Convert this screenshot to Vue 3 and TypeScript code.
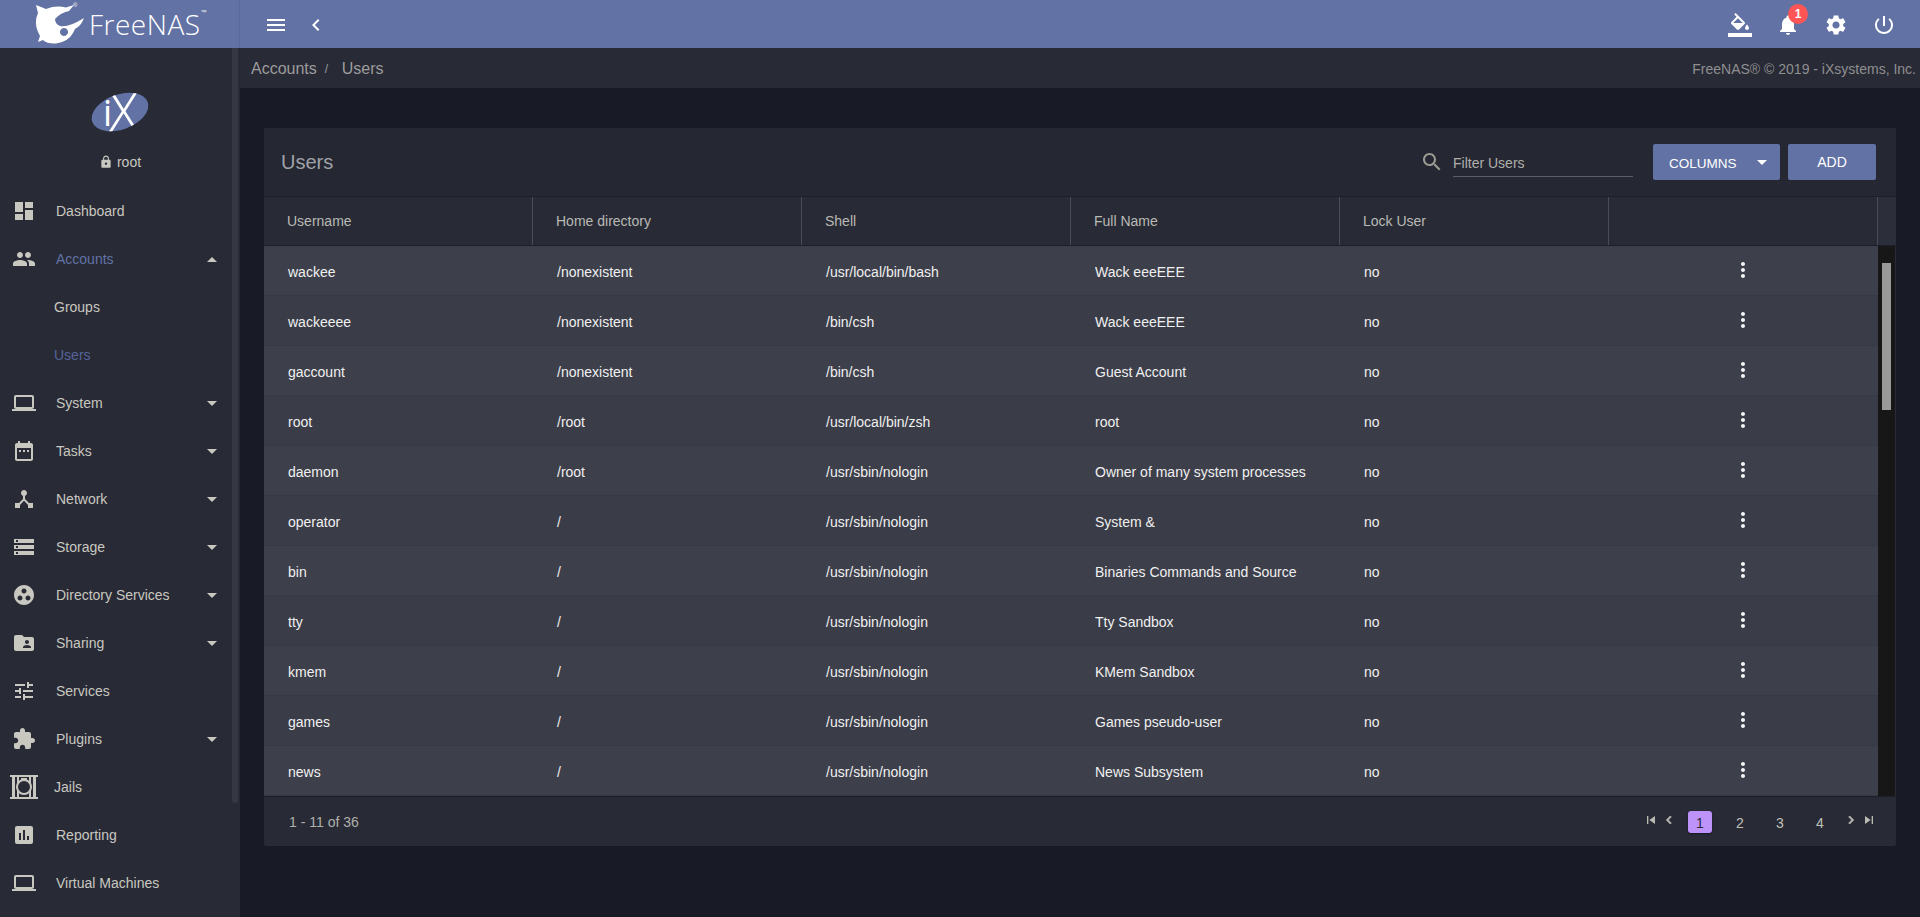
<script setup lang="ts">
const icons: Record<string, string> = {
  dashboard: 'M3 13h8V3H3v10zm0 8h8v-6H3v6zm10 0h8V11h-8v10zm0-18v6h8V3h-8z',
  group: 'M16 11c1.66 0 2.99-1.34 2.99-3S17.66 5 16 5c-1.66 0-3 1.34-3 3s1.34 3 3 3zm-8 0c1.66 0 2.99-1.34 2.99-3S9.66 5 8 5C6.34 5 5 6.34 5 8s1.34 3 3 3zm0 2c-2.33 0-7 1.17-7 3.5V19h14v-2.5c0-2.33-4.67-3.5-7-3.5zm8 0c-.29 0-.62.02-.97.05 1.16.84 1.97 1.97 1.97 3.45V19h6v-2.5c0-2.33-4.67-3.5-7-3.5z',
  laptop: 'M20 18c1.1 0 1.99-.9 1.99-2L22 6c0-1.1-.9-2-2-2H4c-1.1 0-2 .9-2 2v10c0 1.1.9 2 2 2H0v2h24v-2h-4zM4 6h16v10H4V6z',
  tasks: 'M9 11H7v2h2v-2zm4 0h-2v2h2v-2zm4 0h-2v2h2v-2zm2-7h-1V2h-2v2H8V2H6v2H5c-1.11 0-1.99.9-1.99 2L3 20c0 1.1.89 2 2 2h14c1.1 0 2-.9 2-2V6c0-1.1-.9-2-2-2zm0 16H5V9h14v11z',
  hub: 'M17 16l-4-4V8.82C14.16 8.4 15 7.3 15 6c0-1.66-1.34-3-3-3S9 4.34 9 6c0 1.3.84 2.4 2 2.82V12l-4 4H3v5h5v-3.05l4-4.2 4 4.2V21h5v-5h-4z',
  storage: 'M2 20h20v-4H2v4zm2-3h2v2H4v-2zM2 4v4h20V4H2zm4 3H4V5h2v2zm-4 7h20v-4H2v4zm2-3h2v2H4v-2z',
  work: 'M12 2C6.48 2 2 6.48 2 12s4.48 10 10 10 10-4.48 10-10S17.52 2 12 2zM8 17.5c-1.38 0-2.5-1.12-2.5-2.5s1.12-2.5 2.5-2.5 2.5 1.12 2.5 2.5-1.12 2.5-2.5 2.5zM9.5 8c0-1.38 1.12-2.5 2.5-2.5s2.5 1.12 2.5 2.5-1.12 2.5-2.5 2.5S9.5 9.38 9.5 8zm6.5 9.5c-1.38 0-2.5-1.12-2.5-2.5s1.12-2.5 2.5-2.5 2.5 1.12 2.5 2.5-1.12 2.5-2.5 2.5z',
  folder: 'M20 6h-8l-2-2H4c-1.1 0-1.99.9-1.99 2L2 18c0 1.1.9 2 2 2h16c1.1 0 2-.9 2-2V8c0-1.1-.9-2-2-2zm-5 3c1.1 0 2 .9 2 2s-.9 2-2 2-2-.9-2-2 .9-2 2-2zm4 8h-8v-1c0-1.33 2.67-2 4-2s4 .67 4 2v1z',
  tune: 'M3 17v2h6v-2H3zM3 5v2h10V5H3zm10 16v-2h8v-2h-8v-2h-2v6h2zM7 9v2H3v2h4v2h2V9H7zm14 4v-2H11v2h10zm-6-4h2V7h4V5h-4V3h-2v6z',
  extension: 'M20.5 11H19V7c0-1.1-.9-2-2-2h-4V3.5C13 2.12 11.88 1 10.5 1S8 2.12 8 3.5V5H4c-1.1 0-1.99.9-1.99 2v3.8H3.5c1.49 0 2.7 1.21 2.7 2.7s-1.21 2.7-2.7 2.7H2V20c0 1.1.9 2 2 2h3.8v-1.5c0-1.49 1.21-2.7 2.7-2.7 1.49 0 2.7 1.21 2.7 2.7V22H17c1.1 0 2-.9 2-2v-4h1.5c1.38 0 2.5-1.12 2.5-2.5S21.88 11 20.5 11z',
  assessment: 'M19 3H5c-1.1 0-2 .9-2 2v14c0 1.1.9 2 2 2h14c1.1 0 2-.9 2-2V5c0-1.1-.9-2-2-2zM9 17H7v-7h2v7zm4 0h-2V7h2v10zm4 0h-2v-4h2v4z',
  lock: 'M18 8h-1V6c0-2.76-2.24-5-5-5S7 3.24 7 6v2H6c-1.1 0-2 .9-2 2v10c0 1.1.9 2 2 2h12c1.1 0 2-.9 2-2V10c0-1.1-.9-2-2-2zm-6 9c-1.1 0-2-.9-2-2s.9-2 2-2 2 .9 2 2-.9 2-2 2zm3.1-9H8.9V6c0-1.71 1.39-3.1 3.1-3.1 1.71 0 3.1 1.39 3.1 3.1v2z',
  fill: 'M16.56 8.94L7.62 0 6.21 1.41l2.38 2.38-5.15 5.15c-.59.59-.59 1.54 0 2.12l5.5 5.5c.29.29.68.44 1.06.44s.77-.15 1.06-.44l5.5-5.5c.59-.58.59-1.53 0-2.12zM5.21 10L10 5.21 14.79 10H5.21zM19 11.5s-2 2.17-2 3.5c0 1.1.9 2 2 2s2-.9 2-2c0-1.33-2-3.5-2-3.5zM0 20h24v4H0z',
  bell: 'M12 22c1.1 0 2-.9 2-2h-4c0 1.1.89 2 2 2zm6-6v-5c0-3.07-1.64-5.64-4.5-6.32V4c0-.83-.67-1.5-1.5-1.5s-1.5.67-1.5 1.5v.68C7.63 5.36 6 7.92 6 11v5l-2 2v1h16v-1l-2-2z',
  settings: 'M19.14 12.94c.04-.3.06-.61.06-.94 0-.32-.02-.64-.07-.94l2.03-1.58c.18-.14.23-.41.12-.61l-1.92-3.32c-.12-.22-.37-.29-.59-.22l-2.39.96c-.5-.38-1.03-.7-1.62-.94l-.36-2.54c-.04-.24-.24-.41-.48-.41h-3.84c-.24 0-.43.17-.47.41l-.36 2.54c-.59.24-1.13.57-1.62.94l-2.39-.96c-.22-.08-.47 0-.59.22L2.74 8.87c-.12.21-.08.47.12.61l2.03 1.58c-.05.3-.09.63-.09.94s.02.64.07.94l-2.03 1.58c-.18.14-.23.41-.12.61l1.92 3.32c.12.22.37.29.59.22l2.39-.96c.5.38 1.03.7 1.62.94l.36 2.54c.05.24.24.41.48.41h3.84c.24 0 .44-.17.47-.41l.36-2.54c.59-.24 1.13-.56 1.62-.94l2.39.96c.22.08.47 0 .59-.22l1.92-3.32c.12-.22.07-.47-.12-.61l-2.01-1.58zM12 15.6c-1.98 0-3.6-1.62-3.6-3.6s1.62-3.6 3.6-3.6 3.6 1.62 3.6 3.6-1.62 3.6-3.6 3.6z',
  power: 'M13 3h-2v10h2V3zm4.83 2.17l-1.42 1.42C17.99 7.86 19 9.81 19 12c0 3.87-3.13 7-7 7s-7-3.13-7-7c0-2.19 1.01-4.14 2.58-5.42L6.17 5.17C4.23 6.82 3 9.26 3 12c0 4.97 4.03 9 9 9s9-4.03 9-9c0-2.74-1.23-5.18-3.17-6.83z',
  search: 'M15.5 14h-.79l-.28-.27C15.41 12.59 16 11.11 16 9.5 16 5.91 13.09 3 9.5 3S3 5.91 3 9.5 5.91 16 9.5 16c1.61 0 3.09-.59 4.23-1.57l.27.28v.79l5 4.99L20.49 19l-4.99-5zm-6 0C7.01 14 5 11.99 5 9.5S7.01 5 9.5 5 14 7.01 14 9.5 11.99 14 9.5 14z',
  more: 'M12 8c1.1 0 2-.9 2-2s-.9-2-2-2-2 .9-2 2 .9 2 2 2zm0 2c-1.1 0-2 .9-2 2s.9 2 2 2 2-.9 2-2-.9-2-2-2zm0 6c-1.1 0-2 .9-2 2s.9 2 2 2 2-.9 2-2-.9-2-2-2z',
  menu: 'M3 18h18v-2H3v2zm0-5h18v-2H3v2zm0-7v2h18V6H3z',
  left: 'M15.41 7.41L14 6l-6 6 6 6 1.41-1.41L10.83 12z',
  right: 'M10 6L8.59 7.41 13.17 12l-4.58 4.59L10 18l6-6z',
  first: 'M6 6h2v12H6zm3.5 6l8.5 6V6z',
  last: 'M6 18l8.5-6L6 6v12zM16 6v12h2V6h-2z',
}

type NavItem = { label: string; icon?: string; caret?: 'up' | 'down'; active?: boolean; sub?: boolean; jail?: boolean }

const nav: NavItem[] = [
  { label: 'Dashboard', icon: 'dashboard' },
  { label: 'Accounts', icon: 'group', caret: 'up', active: true },
  { label: 'Groups', sub: true },
  { label: 'Users', sub: true, active: true },
  { label: 'System', icon: 'laptop', caret: 'down' },
  { label: 'Tasks', icon: 'tasks', caret: 'down' },
  { label: 'Network', icon: 'hub', caret: 'down' },
  { label: 'Storage', icon: 'storage', caret: 'down' },
  { label: 'Directory Services', icon: 'work', caret: 'down' },
  { label: 'Sharing', icon: 'folder', caret: 'down' },
  { label: 'Services', icon: 'tune' },
  { label: 'Plugins', icon: 'extension', caret: 'down' },
  { label: 'Jails', jail: true },
  { label: 'Reporting', icon: 'assessment' },
  { label: 'Virtual Machines', icon: 'laptop' },
]

const columns = ['Username', 'Home directory', 'Shell', 'Full Name', 'Lock User', '']

const users = [
  ['wackee', '/nonexistent', '/usr/local/bin/bash', 'Wack eeeEEE', 'no'],
  ['wackeeee', '/nonexistent', '/bin/csh', 'Wack eeeEEE', 'no'],
  ['gaccount', '/nonexistent', '/bin/csh', 'Guest Account', 'no'],
  ['root', '/root', '/usr/local/bin/zsh', 'root', 'no'],
  ['daemon', '/root', '/usr/sbin/nologin', 'Owner of many system processes', 'no'],
  ['operator', '/', '/usr/sbin/nologin', 'System &', 'no'],
  ['bin', '/', '/usr/sbin/nologin', 'Binaries Commands and Source', 'no'],
  ['tty', '/', '/usr/sbin/nologin', 'Tty Sandbox', 'no'],
  ['kmem', '/', '/usr/sbin/nologin', 'KMem Sandbox', 'no'],
  ['games', '/', '/usr/sbin/nologin', 'Games pseudo-user', 'no'],
  ['news', '/', '/usr/sbin/nologin', 'News Subsystem', 'no'],
]

const pages = [1, 2, 3, 4]
</script>

<template>
  <div class="app">
    <header class="topbar">
      <div class="brand">
        <svg class="shark" viewBox="34 2 52 44" width="52" height="44">
          <path
            fill-rule="evenodd"
            d="M36 5L46 9Q56 5 66 7.5L74 5L69 11Q60 13 55 19Q55 24 60 26Q68 28 84 18Q81 26 75 29L73 33Q68 42 56 43.5Q47 44 43 40L38 42L40 36Q33 24 38 13ZM64 28a4 4 0 1 0 .01 0Z"
          />
        </svg>
        <span class="reg">®</span>
        <span class="wordmark">FreeNAS</span>
        <span class="tm">™</span>
      </div>
      <button class="top-btn menu-btn"><svg class="ic" viewBox="0 0 24 24"><path :d="icons.menu" /></svg></button>
      <button class="top-btn back-btn"><svg class="ic" viewBox="0 0 24 24"><path :d="icons.left" /></svg></button>
      <div class="top-actions">
        <button class="top-btn"><svg class="ic" viewBox="0 0 24 24"><path :d="icons.fill" /></svg></button>
        <button class="top-btn bell">
          <svg class="ic" viewBox="0 0 24 24"><path :d="icons.bell" /></svg>
          <span class="badge">1</span>
        </button>
        <button class="top-btn"><svg class="ic" viewBox="0 0 24 24"><path :d="icons.settings" /></svg></button>
        <button class="top-btn"><svg class="ic" viewBox="0 0 24 24"><path :d="icons.power" /></svg></button>
      </div>
    </header>

    <div class="main">
      <aside class="sidebar">
        <div class="thumb"></div>
        <div class="profile">
          <svg class="ix" viewBox="-20 -28 100 100" width="100" height="100">
            <defs>
              <clipPath id="ixclip"><ellipse cx="30" cy="22" rx="29.5" ry="17.5" transform="rotate(-20 30 22)" /></clipPath>
            </defs>
            <ellipse cx="30" cy="22" rx="29.5" ry="17.5" transform="rotate(-20 30 22)" fill="#6272a4" />
            <g clip-path="url(#ixclip)" fill="#fff">
              <text><tspan x="13" y="36" class="ix-i">i</tspan><tspan x="18" y="43" class="ix-x">X</tspan></text>
            </g>
          </svg>
          <div class="who"><svg class="ic lock" viewBox="0 0 24 24"><path :d="icons.lock" /></svg><span>root</span></div>
        </div>
        <nav>
          <a
            v-for="item in nav"
            :key="item.label"
            class="nav-item"
            :class="{ active: item.active, sub: item.sub, 'jail-item': item.jail }"
          >
            <svg v-if="item.icon" class="ic nav-ic" viewBox="0 0 24 24"><path :d="icons[item.icon]" /></svg>
            <svg v-if="item.jail" class="jail" viewBox="0 0 28 24" width="28" height="24">
              <rect x="0" y="0" width="28" height="2" />
              <rect x="0" y="22" width="28" height="2" />
              <rect x="2" y="2" width="3" height="20" />
              <rect x="7" y="2" width="2" height="20" />
              <rect x="19" y="2" width="2" height="20" />
              <rect x="23" y="2" width="3" height="20" />
              <circle cx="14" cy="12" r="7" fill="#282a36" stroke="#c8c8c0" stroke-width="2" />
              <rect x="11" y="3" width="6" height="2" />
            </svg>
            <span class="nav-label">{{ item.label }}</span>
            <span v-if="item.caret" class="caret" :class="item.caret"></span>
          </a>
        </nav>
      </aside>

      <div class="content">
        <div class="crumbs">
          <div class="crumb-path">
            <span>Accounts</span>
            <span class="slash">/</span>
            <span>Users</span>
          </div>
          <div class="copyright">FreeNAS® © 2019 - iXsystems, Inc.</div>
        </div>

        <section class="card">
          <div class="card-head">
            <h1>Users</h1>
            <div class="filter">
              <svg class="ic search" viewBox="0 0 24 24"><path :d="icons.search" /></svg>
              <div class="filter-input">Filter Users</div>
            </div>
            <button class="btn columns">COLUMNS<span class="caret white"></span></button>
            <button class="btn add">ADD</button>
          </div>

          <div class="thead">
            <div class="cols">
              <div v-for="(c, i) in columns" :key="i" class="th">{{ c }}</div>
            </div>
            <div class="gutter-head"></div>
          </div>

          <div class="tbody">
            <div class="rows">
              <div v-for="u in users" :key="u[0]" class="cols row">
                <div v-for="(v, i) in u" :key="i" class="td">{{ v }}</div>
                <div class="td action"><svg class="ic" viewBox="0 0 24 24"><path :d="icons.more" /></svg></div>
              </div>
            </div>
            <div class="track"><div class="track-thumb"></div></div>
          </div>

          <div class="card-foot">
            <span class="range">1 - 11 of 36</span>
            <div class="pager">
              <svg class="ic pg-ic" viewBox="0 0 24 24"><path :d="icons.first" /></svg>
              <svg class="ic pg-ic prev" viewBox="0 0 24 24"><path :d="icons.left" /></svg>
              <span v-for="p in pages" :key="p" class="page" :class="{ current: p === 1 }">{{ p }}</span>
              <svg class="ic pg-ic next" viewBox="0 0 24 24"><path :d="icons.right" /></svg>
              <svg class="ic pg-ic" viewBox="0 0 24 24"><path :d="icons.last" /></svg>
            </div>
          </div>
        </section>
      </div>
    </div>
  </div>
</template>

<style>
html,
body {
  margin: 0;
  background: #181a26;
  overflow: hidden;
}
</style>

<style scoped>
.app {
  height: 917px;
  display: flex;
  flex-direction: column;
  font-family: 'Liberation Sans', Arial, sans-serif;
  font-size: 14px;
  overflow: hidden;
}
.ic {
  width: 24px;
  height: 24px;
  fill: currentColor;
  flex: none;
}
.topbar {
  height: 48px;
  flex: none;
  display: flex;
  align-items: center;
  background: #6272a4;
  color: #fff;
}
.brand {
  width: 240px;
  height: 48px;
  flex: none;
  box-sizing: border-box;
  border-right: 1px solid #5a699a;
  position: relative;
  display: flex;
  align-items: center;
  padding-left: 34px;
}
.shark {
  fill: #fff;
  flex: none;
}
.reg {
  position: absolute;
  left: 73px;
  top: 2px;
  font-size: 6px;
}
.wordmark {
  margin-left: 3px;
  font-family: 'Open Sans', sans-serif;
  font-weight: 300;
  font-size: 28px;
  line-height: 48px;
  letter-spacing: 0.5px;
}
.tm {
  font-size: 6px;
  margin-bottom: 24px;
}
.top-btn {
  width: 48px;
  height: 48px;
  padding: 2px 0 0;
  border: 0;
  background: none;
  color: #fff;
  display: flex;
  align-items: center;
  justify-content: center;
  position: relative;
}
.menu-btn {
  margin-left: 12px;
}
.back-btn {
  margin-left: -8px;
}
.top-actions {
  margin-left: auto;
  padding-right: 12px;
  display: flex;
}
.badge {
  position: absolute;
  left: 24px;
  top: 4px;
  width: 20px;
  height: 20px;
  border-radius: 50%;
  background: #ff5555;
  font-size: 12px;
  font-weight: 700;
  line-height: 20px;
  text-align: center;
}
.main {
  flex: 1;
  display: flex;
  min-height: 0;
}
.sidebar {
  width: 240px;
  flex: none;
  background: #282a36;
  position: relative;
  color: #c8c8c0;
}
.thumb {
  position: absolute;
  left: 232px;
  top: 0;
  width: 6px;
  height: 755px;
  border-radius: 0 0 3px 3px;
  background: #363844;
}
.profile {
  height: 139px;
  box-sizing: border-box;
  padding-top: 42px;
  display: flex;
  flex-direction: column;
  align-items: center;
}
.ix {
  display: block;
  margin: -28px -20px;
}
.ix-i {
  font-family: 'Open Sans', sans-serif;
  font-size: 36px;
}
.ix-x {
  font-family: 'Open Sans', sans-serif;
  font-weight: 300;
  font-size: 58px;
}
.who {
  margin-top: 18px;
  display: flex;
  align-items: center;
  gap: 4px;
  line-height: 20px;
}
.lock {
  width: 14px;
  height: 14px;
}
.nav-item {
  height: 48px;
  display: flex;
  align-items: center;
  padding-left: 12px;
  position: relative;
}
.nav-ic {
  margin-right: 20px;
}
.nav-item.active {
  color: #6272a4;
}
.nav-item.active .nav-ic {
  color: #c8c8c0;
}
.nav-item.sub {
  padding-left: 54px;
}
.nav-item.sub.active {
  color: #55659a;
}
.jail-item {
  padding-left: 10px;
}
.jail {
  fill: #c8c8c0;
  margin-right: 16px;
}
.caret {
  position: absolute;
  left: 207px;
  top: 22px;
  width: 0;
  height: 0;
  border-left: 5px solid transparent;
  border-right: 5px solid transparent;
}
.caret.down {
  border-top: 5px solid #c8c8c0;
}
.caret.up {
  border-bottom: 5px solid #c8c8c0;
}
.content {
  flex: 1;
  min-width: 0;
}
.crumbs {
  height: 40px;
  box-sizing: border-box;
  background: #282a36;
  display: flex;
  align-items: center;
  justify-content: space-between;
  padding: 2px 4px 0 11px;
}
.crumb-path {
  display: flex;
  align-items: center;
  font-size: 16px;
  color: #9c9c9c;
}
.slash {
  font-size: 12px;
  width: 25px;
  padding-left: 8px;
  box-sizing: border-box;
}
.copyright {
  color: #8f8f8f;
}
.card {
  margin: 40px 24px 0;
  height: 718px;
  display: flex;
  flex-direction: column;
  background: #282a36;
  border-radius: 2px;
  overflow: hidden;
}
.card-head {
  height: 68px;
  flex: none;
  box-sizing: border-box;
  background: #252733;
  display: flex;
  align-items: center;
  padding: 0 20px 0 17px;
}
h1 {
  margin: 0 auto 0 0;
  font-size: 20px;
  font-weight: 400;
  color: #9fa2a6;
}
.filter {
  display: flex;
  align-items: center;
  margin-right: 20px;
}
.search {
  color: #9b9b92;
  margin-right: 9px;
}
.filter-input {
  width: 180px;
  height: 28px;
  line-height: 29px;
  box-sizing: border-box;
  margin-top: 2px;
  border-bottom: 1px solid #5c5e68;
  color: #b0b0aa;
}
.btn {
  height: 36px;
  border: 0;
  border-radius: 2px;
  background: #6272a4;
  color: #fff;
  font: inherit;
  padding: 0;
}
.columns {
  width: 127px;
  margin-right: 8px;
  text-align: left;
  padding: 2px 0 0 16px;
  position: relative;
  font-size: 13.5px;
}
.caret.white {
  left: 104px;
  top: 16px;
  border-top: 5px solid #fff;
}
.add {
  width: 88px;
}
.thead {
  height: 50px;
  flex: none;
  box-sizing: border-box;
  display: flex;
  border-top: 1px solid #1c1e29;
  border-bottom: 1px solid #1c1e29;
}
.cols {
  flex: 1;
  display: grid;
  grid-template-columns: repeat(6, 1fr);
}
.th {
  display: flex;
  align-items: center;
  padding-left: 23px;
  color: #b9bab4;
  border-right: 1px solid #4a4c57;
}
.gutter-head {
  width: 18px;
  flex: none;
  background: #2c2e3a;
}
.tbody {
  height: 550px;
  flex: none;
  display: flex;
}
.rows {
  flex: 1;
}
.row {
  height: 50px;
  box-sizing: border-box;
  background: #3a3c47;
  border-bottom: 1px solid #363843;
}
.row:nth-child(odd) {
  background: #3d3f4a;
}
.td {
  display: flex;
  align-items: center;
  padding: 2px 0 0 24px;
  color: #f0f0f0;
}
.td.action {
  padding: 0 1px 2px 0;
  justify-content: center;
  color: #f4f4f4;
}
.track {
  width: 17px;
  flex: none;
  background: #171717;
  margin-right: 1px;
  padding-top: 17px;
  box-sizing: border-box;
}
.track-thumb {
  width: 9px;
  height: 147px;
  margin-left: 4px;
  background: #999;
}
.card-foot {
  flex: 1;
  display: flex;
  align-items: center;
  justify-content: space-between;
  border-top: 1px solid #1c1e29;
  padding: 0 19px 0 25px;
  color: #b0b0aa;
}
.pager {
  display: flex;
  align-items: center;
}
.pg-ic {
  width: 16px;
  height: 16px;
  margin-left: 2px;
  margin-top: -4px;
  color: #b9b9b2;
}
.prev,
.next {
  stroke: currentColor;
  stroke-width: 1.2;
}
.prev {
  margin-right: 3px;
}
.next {
  margin-left: 3px;
}
.page {
  width: 24px;
  height: 22px;
  margin: 0 8px;
  line-height: 24px;
  text-align: center;
  color: #c0c0ba;
  border-radius: 3px;
}
.page.current {
  background: #bd93f9;
  color: #282a36;
  box-shadow: 0 1px 2px rgba(0, 0, 0, 0.4);
}
</style>
